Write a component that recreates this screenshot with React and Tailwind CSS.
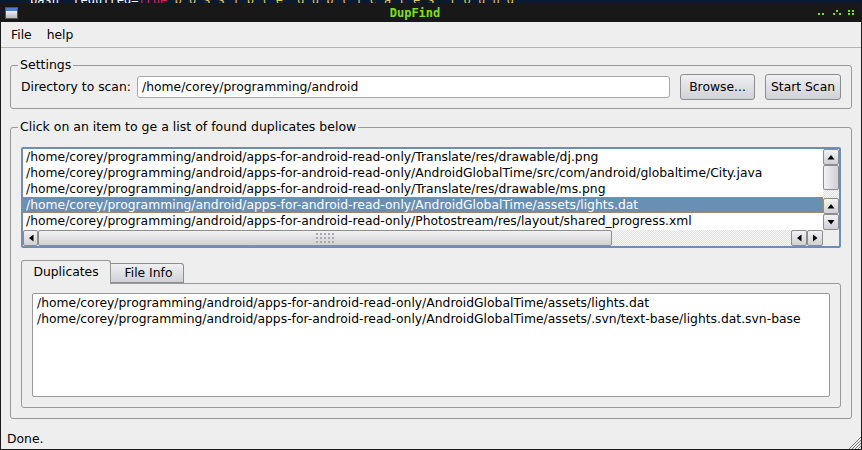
const base = "/home/corey/programming/android/apps-for-android-read-only/";

const files = [
  "Translate/res/drawable/dj.png",
  "AndroidGlobalTime/src/com/android/globaltime/City.java",
  "Translate/res/drawable/ms.png",
  "AndroidGlobalTime/assets/lights.dat",
  "Photostream/res/layout/shared_progress.xml",
];

const duplicates = [
  "AndroidGlobalTime/assets/lights.dat",
  "AndroidGlobalTime/assets/.svn/text-base/lights.dat.svn-base",
];

const arrows = {
  up: "M4 2 L0.5 6.5 L7.5 6.5 Z",
  down: "M4 6.5 L0.5 2 L7.5 2 Z",
  left: "M2 4 L6.5 0.5 L6.5 7.5 Z",
  right: "M6.5 4 L2 0.5 L2 7.5 Z",
};

function ScrollButton({ dir, className }) {
  return (
    <div className={`flex items-center justify-center rounded-[2px] border border-[#8d8d8d] bg-gradient-to-b from-[#f2f2f4] to-[#cfd0d6] ${className}`}>
      <svg width="8" height="8" viewBox="0 0 8 8">
        <path d={arrows[dir]} fill="#000" />
      </svg>
    </div>
  );
}

function WindowButtons() {
  const dots = [
    [0, 3], [4, 3],
    [15, 3], [18, 0], [21, 3],
    [30, 0], [34, 0], [30, 3], [34, 3],
  ];
  return (
    <svg width="37" height="6" viewBox="0 0 37 6" className="mr-[6px]">
      {dots.map(([x, y]) => (
        <rect key={`${x}-${y}`} x={x} y={y} width="2" height="2" fill="#7fe01a" />
      ))}
    </svg>
  );
}

function Grip() {
  const dots = [];
  for (let row = 0; row < 3; row++) {
    for (let col = 0; col < 5; col++) {
      dots.push(<rect key={`${row}-${col}`} x={col * 4} y={row * 4} width="2" height="2" fill="#a9a9ad" />);
    }
  }
  return (
    <svg width="18" height="10" viewBox="0 0 18 10">
      {dots}
    </svg>
  );
}

const trough = "bg-[repeating-conic-gradient(#e2e2e2_0_25%,#f6f6f6_0_50%)] bg-[length:2px_2px]";

export default function App() {
  return (
    <div className="flex h-[450px] w-[862px] flex-col overflow-hidden bg-[#eeeeee] font-['DejaVu_Sans',sans-serif] text-[12.35px] text-black">
      <div className="h-[3px] overflow-hidden whitespace-pre bg-[#0a1a33] pl-[30px] font-['DejaVu_Sans_Mono',monospace] text-[12px] leading-[0px] text-white">
        bash  required=<span className="text-[#e0204a]">true</span> <span className="text-[#e6c84a]">p o s s i b l e  d u p l i c a t e s  f o u n d</span>
      </div>

      <div className="flex min-h-0 flex-1 flex-col border-x border-b border-[#1a1a1a]">
        <div className="flex h-[19px] shrink-0 items-center bg-[#181818]">
          <div className="ml-[4px] h-[12px] w-[13px] border border-[#555] bg-gradient-to-b from-[#4a80c8] from-[25%] via-[#f0f0f0] via-[30%] to-[#b8b8b8]" />
          <div className="flex-1 pr-[6px] text-center font-['DejaVu_Sans_Mono',monospace] text-[12px] font-bold text-[#7fe01a]">
            DupFind
          </div>
          <WindowButtons />
        </div>

        <div className="flex h-[26px] shrink-0 items-center gap-[15px] border-b border-[#b5b5b5] pl-[10px] pt-[1px]">
          <span>File</span>
          <span>help</span>
        </div>

        <div className="flex min-h-0 flex-1 flex-col px-[9px] pt-[9px]">
          <fieldset className="h-[52px] shrink-0 rounded-[3px] border border-[#999999] px-[10px]">
            <legend className="ml-[-3px] px-[2px] text-[12.5px] leading-[16px]">Settings</legend>
            <div className="flex items-center pt-[1px]">
              <span className="mr-[6px] w-[110px] whitespace-nowrap">Directory to scan:</span>
              <div className="flex h-[22px] w-[533px] items-center rounded-[3px] border border-[#a8a8a8] bg-white pl-[4px]">
                /home/corey/programming/android
              </div>
              <div className="ml-[10px] flex h-[26px] w-[75px] items-center justify-center rounded-[3px] border border-[#8d8d8d] bg-gradient-to-b from-[#f0f0f2] to-[#d0d1d7]">
                Browse...
              </div>
              <div className="ml-[10px] flex h-[26px] w-[76px] items-center justify-center rounded-[3px] border border-[#8d8d8d] bg-gradient-to-b from-[#f0f0f2] to-[#d0d1d7]">
                Start Scan
              </div>
            </div>
          </fieldset>

          <fieldset className="mt-[10px] h-[300px] shrink-0 rounded-[3px] border border-[#999999] px-[10px]">
            <legend className="ml-[-3px] px-[2px] text-[12.5px] leading-[16px]">Click on an item to ge a list of found duplicates below</legend>

            <div className="mt-[12px] flex h-[101px] flex-col rounded-[2px] border-2 border-[#6d8fb3] bg-white">
              <div className="flex min-h-0 flex-1">
                <div className="min-w-0 flex-1 overflow-hidden">
                  {files.map((file, i) => (
                    <div
                      key={file}
                      className={`h-[16px] whitespace-nowrap pl-[3px] leading-[16px] ${i === 3 ? "bg-[#6a8fb5] text-white outline-1 -outline-offset-1 outline-dotted outline-[#a08a70]" : ""}`}
                    >
                      {base + file}
                    </div>
                  ))}
                </div>
                <div className={`flex w-[16px] shrink-0 flex-col ${trough}`}>
                  <ScrollButton dir="up" className="h-[16px] shrink-0" />
                  <div className="h-[25px] shrink-0 rounded-[2px] border border-[#8d8d8d] bg-gradient-to-r from-[#f2f2f4] to-[#cfd0d6]" />
                  <div className="flex-1" />
                  <ScrollButton dir="up" className="h-[16px] shrink-0" />
                  <ScrollButton dir="down" className="h-[16px] shrink-0" />
                </div>
              </div>
              <div className="flex h-[16px] shrink-0 bg-[#eeeeee]">
                <ScrollButton dir="left" className="w-[15px] shrink-0" />
                <div className={`flex min-w-0 flex-1 ${trough}`}>
                  <div className="flex w-[574px] shrink-0 items-center justify-center rounded-[2px] border border-[#8d8d8d] bg-gradient-to-b from-[#f2f2f4] to-[#cfd0d6]">
                    <Grip />
                  </div>
                </div>
                <ScrollButton dir="left" className="w-[16px] shrink-0" />
                <ScrollButton dir="right" className="w-[16px] shrink-0" />
                <div className="w-[16px] shrink-0" />
              </div>
            </div>

            <div className="mt-[12px] flex h-[23px] items-end">
              <div className="z-10 mb-[-1px] flex h-[24px] w-[90px] items-center justify-center rounded-t-[3px] border border-b-0 border-[#999999] bg-[#eeeeee]">
                Duplicates
              </div>
              <div className="flex h-[20px] w-[73px] items-center justify-center rounded-tr-[3px] border border-l-0 border-[#8d8d8d] bg-gradient-to-b from-[#f0f0f2] to-[#d0d1d7] pl-[3px] pt-[1px]">
                File Info
              </div>
            </div>

            <div className="h-[125px] rounded-b-[3px] rounded-tr-[3px] border border-[#999999] px-[10px] pt-[9px]">
              <div className="h-[104px] rounded-[2px] border border-[#999999] bg-white pl-[4px] pt-[1px]">
                {duplicates.map((file) => (
                  <div key={file} className="h-[16px] whitespace-nowrap leading-[16px]">
                    {base + file}
                  </div>
                ))}
              </div>
            </div>
          </fieldset>

          <div className="relative flex min-h-0 flex-1 items-end">
            <span className="ml-[-3px]">Done.</span>
            <svg width="13" height="13" viewBox="0 0 13 13" className="absolute bottom-0 right-[-9px]">
              <path d="M13 1 L1 13 M13 4 L4 13 M13 7 L7 13 M13 10 L10 13" stroke="#777" strokeWidth="1" />
            </svg>
          </div>
        </div>
      </div>
    </div>
  );
}
